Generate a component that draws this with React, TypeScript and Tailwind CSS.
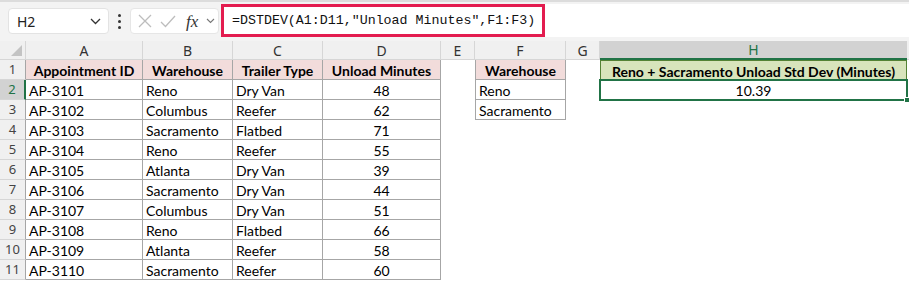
import React from "react";

const rows = [
  ["AP-3101", "Reno", "Dry Van", "48"],
  ["AP-3102", "Columbus", "Reefer", "62"],
  ["AP-3103", "Sacramento", "Flatbed", "71"],
  ["AP-3104", "Reno", "Reefer", "55"],
  ["AP-3105", "Atlanta", "Dry Van", "39"],
  ["AP-3106", "Sacramento", "Dry Van", "44"],
  ["AP-3107", "Columbus", "Dry Van", "51"],
  ["AP-3108", "Reno", "Flatbed", "66"],
  ["AP-3109", "Atlanta", "Reefer", "58"],
  ["AP-3110", "Sacramento", "Reefer", "60"],
];

const cols = [
  { l: "A", w: "w-[117px]" },
  { l: "B", w: "w-[90px]" },
  { l: "C", w: "w-[90px]" },
  { l: "D", w: "w-[118px]" },
  { l: "E", w: "w-[34px]" },
  { l: "F", w: "w-[91px]" },
  { l: "G", w: "w-[34px]" },
  { l: "H", w: "w-[307px]" },
];

const cellFont = { fontFamily: "Lato, 'Liberation Sans', sans-serif" };
const uiFont = { fontFamily: "'Noto Sans', 'Open Sans', sans-serif" };

function RowHead({ n, active }: { n: number; active?: boolean }) {
  return (
    <div
      className={`w-[26px] h-full shrink-0 flex items-center justify-center text-[13px] border-b border-[#d6d6d6] ${
        active
          ? "bg-[#d2d2d2] text-[#217346] border-r-2 border-r-[#217346]"
          : "bg-[#f0f0f0] text-[#444] border-r border-r-[#a6a6a6]"
      }`}
      style={uiFont}
    >
      {n}
    </div>
  );
}

export default function App() {
  return (
    <div className="w-[909px] h-[282px] bg-white overflow-hidden text-black">
      {/* Formula bar */}
      <div className="h-[41px] bg-[#f3f3f3] border-t-2 border-[#dcdcdc] flex items-start">
        <div
          className="ml-[8px] mt-[6px] w-[101px] h-[26px] bg-white rounded-[4px] border border-[#e3e3e3] flex items-center justify-between pl-[8px] pr-[7px] text-[14px] text-[#222]"
          style={uiFont}
        >
          <span>H2</span>
          <svg width="11" height="7" viewBox="0 0 11 7" fill="none" stroke="#333" strokeWidth="1.3">
            <path d="M1 1l4.5 4.5L10 1" />
          </svg>
        </div>
        <div className="w-[21px] h-[30px] mt-[4px] flex flex-col items-center justify-center gap-[3px]">
          <span className="w-[3px] h-[3px] bg-[#333] rounded-full" />
          <span className="w-[3px] h-[3px] bg-[#333] rounded-full" />
          <span className="w-[3px] h-[3px] bg-[#333] rounded-full" />
        </div>
        <div className="mt-[6px] w-[89px] h-[26px] bg-white rounded-[4px] border border-[#e6e6e6] flex items-center pl-[7px] gap-[8px]">
          <svg width="14" height="14" viewBox="0 0 14 14" stroke="#bdbdbd" strokeWidth="1.3">
            <path d="M1 1l12 12M13 1L1 13" />
          </svg>
          <svg width="16" height="13" viewBox="0 0 16 13" fill="none" stroke="#bdbdbd" strokeWidth="1.3">
            <path d="M1 7l4.5 4.5L15 1" />
          </svg>
          <span
            className="italic text-[17px] text-[#333] leading-none ml-[2px]"
            style={{ fontFamily: "'Liberation Serif', serif" }}
          >
            fx
          </span>
          <svg width="9" height="6" viewBox="0 0 9 6" fill="none" stroke="#777" strokeWidth="1.1">
            <path d="M1 1l3.5 3.5L8 1" />
          </svg>
        </div>
        <div className="ml-[2px] mt-[2px] flex-1 h-[33px] bg-white">
          <div
            className="w-[324px] h-[33px] border-[3px] border-[#e31c4f] flex items-center pl-[8px] text-[13.3px] text-[#111]"
            style={{ fontFamily: "'Liberation Mono', monospace" }}
          >
            =DSTDEV(A1:D11,"Unload Minutes",F1:F3)
          </div>
        </div>
      </div>

      {/* Column headers */}
      <div className="h-[19px] flex bg-[#f0f0f0]" style={uiFont}>
        <div className="w-[26px] shrink-0 relative border-r border-b border-[#d6d6d6]">
          <div className="absolute right-[3px] bottom-[3px] w-0 h-0 border-l-[11px] border-l-transparent border-b-[11px] border-b-[#c3c3c3]" />
        </div>
        {cols.map((c) =>
          c.l === "H" ? (
            <div
              key={c.l}
              className={`${c.w} shrink-0 bg-[#d2d2d2] text-[#217346] text-[14px] flex items-center justify-center border-b-2 border-[#217346]`}
            >
              {c.l}
            </div>
          ) : (
            <div
              key={c.l}
              className={`${c.w} shrink-0 text-[14px] text-[#333] flex items-center justify-center border-r border-b border-[#d6d6d6]`}
            >
              {c.l}
            </div>
          )
        )}
        <div className="flex-1 border-b border-[#d6d6d6]" />
      </div>

      {/* Row 1 */}
      <div className="h-[20px] flex text-[14px]" style={cellFont}>
        <RowHead n={1} />
        {["Appointment ID", "Warehouse", "Trailer Type", "Unload Minutes"].map((t, i) => (
          <div
            key={t}
            className={`${cols[i].w} shrink-0 bg-[#f2dcdb] font-bold flex items-center justify-center pt-[1px] border-r border-b border-[#a6a6a6]`}
          >
            {t}
          </div>
        ))}
        <div className="w-[34px] shrink-0" />
        <div className="w-[91px] shrink-0 bg-[#f2dcdb] font-bold flex items-center justify-center pt-[1px] border border-[#a6a6a6] border-t-0">
          Warehouse
        </div>
        <div className="w-[34px] shrink-0" />
        <div className="w-[307px] shrink-0 bg-[#d8e4bc] font-bold flex items-center justify-center pt-[1px] border border-[#548235] border-b-0">
          Reno + Sacramento Unload Std Dev (Minutes)
        </div>
      </div>

      {/* Data rows */}
      {rows.map((r, idx) => {
        const n = idx + 2;
        const f = n === 2 ? "Reno" : n === 3 ? "Sacramento" : null;
        return (
          <div key={n} className="h-[20px] flex text-[14px]" style={cellFont}>
            <RowHead n={n} active={n === 2} />
            {r.map((v, i) => (
              <div
                key={i}
                className={`${cols[i].w} shrink-0 flex items-center pt-[1px] border-r border-b border-[#a6a6a6] ${
                  i === 3 ? "justify-center" : "pl-[3px]"
                }`}
              >
                {v}
              </div>
            ))}
            <div className="w-[34px] shrink-0" />
            {f ? (
              <div className="w-[91px] shrink-0 flex items-center pl-[3px] pt-[1px] border-x border-b border-[#a6a6a6]">
                {f}
              </div>
            ) : (
              <div className="w-[91px] shrink-0" />
            )}
            <div className="w-[33px] shrink-0" />
            {n === 2 ? (
              <div className="w-[309px] shrink-0 relative flex items-center justify-center pt-[1px] border-2 border-[#217346] -mt-[1px] h-[22px]">
                10.39
                <div className="absolute -right-[4px] -bottom-[4px] w-[6px] h-[6px] bg-[#217346] border border-white" />
              </div>
            ) : (
              <div className="w-[309px] shrink-0" />
            )}
          </div>
        );
      })}
    </div>
  );
}
